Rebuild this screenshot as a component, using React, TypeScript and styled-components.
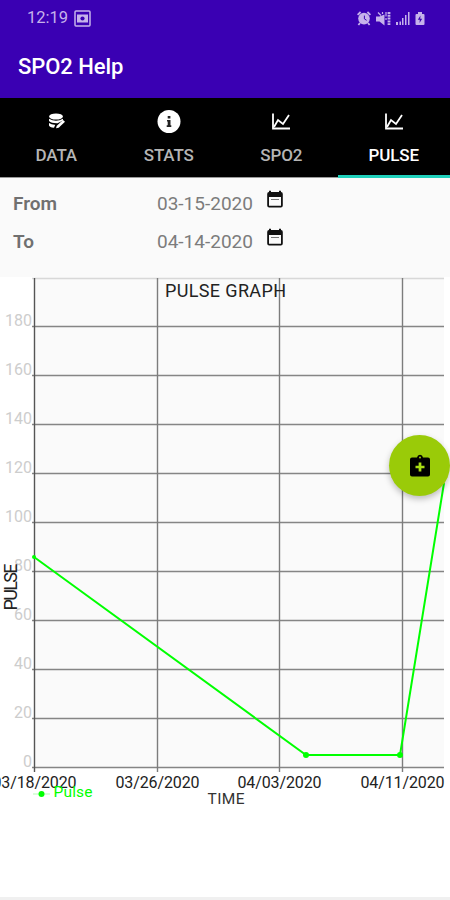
import React from "react";
import styled, { createGlobalStyle } from "styled-components";

const GlobalStyle = createGlobalStyle`
  * { box-sizing: border-box; }
  body { margin: 0; background: #fff; font-family: Roboto, "Liberation Sans", sans-serif; }
`;

const Screen = styled.main`
  position: relative;
  width: 450px;
  height: 900px;
  overflow: hidden;
  background: #fff;
  display: flex;
  flex-direction: column;
`;

const StatusBar = styled.div`
  height: 36px;
  flex: none;
  display: flex;
  align-items: center;
  justify-content: space-between;
  padding: 0 25px 0 27px;
  background: #3a00b3;
  color: #c6b2eb;
`;

const StatusGroup = styled.div<{ $gap: number }>`
  display: flex;
  align-items: center;
  gap: ${(p) => p.$gap}px;
  svg { display: block; }
`;

const Clock = styled.span`
  font-size: 16.5px;
  line-height: 20px;
`;

const AppBar = styled.header`
  height: 62px;
  flex: none;
  padding: 0 18px;
  background: #3a00b3;
  color: #fff;
`;

const Title = styled.h1`
  margin: 0;
  padding-top: 17px;
  font-size: 22px;
  line-height: 28px;
  font-weight: 500;
  letter-spacing: -0.05px;
`;

const Tabs = styled.nav`
  height: 80px;
  flex: none;
  display: grid;
  grid-template-columns: repeat(4, 1fr);
  background: #000;
  border-bottom: 1px solid #999;
`;

const Tab = styled.div<{ $active?: boolean }>`
  display: flex;
  flex-direction: column;
  align-items: center;
  height: 80px;
  padding-top: 11px;
  color: ${(p) => (p.$active ? "#fff" : "#b5b5b5")};
  border-bottom: 3px solid ${(p) => (p.$active ? "#1fd0bb" : "transparent")};
  font-size: 17px;
  line-height: 22px;
  font-weight: 500;
  letter-spacing: -0.1px;
  svg { display: block; height: 25px; margin-bottom: 10px; }
`;

const Filters = styled.section`
  height: 99px;
  flex: none;
  padding-top: 6px;
  background: #fafafa;
`;

const FilterRow = styled.div`
  height: 38px;
  display: grid;
  grid-template-columns: 144px 109px 24px;
  align-items: center;
  padding-left: 13px;
  font-size: 19px;
  svg { display: block; margin-top: -8px; }
`;

const FilterLabel = styled.span`
  color: #707070;
  font-weight: 600;
`;

const FilterDate = styled.span`
  color: #7c7c7c;
`;

const ChartArea = styled.section`
  flex: 1;
  min-height: 0;
  svg { display: block; }
`;

const BottomEdge = styled.footer`
  height: 3px;
  flex: none;
  background: #f0f0f0;
`;

const AddButton = styled.button`
  position: absolute;
  left: 389px;
  top: 435px;
  width: 61px;
  height: 61px;
  border: 0;
  border-radius: 50%;
  padding: 0;
  display: grid;
  place-items: center;
  background: #9acb08;
  box-shadow: 0 3px 6px rgba(0, 0, 0, 0.25);
`;

const ScreenshotIcon = () => (
  <svg width="17" height="17" viewBox="0 0 17 17" fill="none" stroke="currentColor">
    <rect x="1" y="1" width="15" height="15" rx="1" strokeWidth="1.5" />
    <path d="M3 4.5h11v8H3z" fill="currentColor" stroke="none" />
    <circle cx="8.5" cy="8.5" r="2.1" fill="#3a00b3" stroke="none" />
  </svg>
);

const AlarmIcon = () => (
  <svg width="14" height="15" viewBox="0 0 14 15" fill="none" stroke="currentColor">
    <circle cx="7" cy="7.6" r="5.8" fill="currentColor" stroke="none" />
    <path d="M.6 3.8 3.6 1M13.4 3.8 10.4 1M3 12l-1.6 2M11 12l1.6 2" strokeWidth="1.8" />
    <path d="M7.4 4.6v3.3l2.2 1.4" stroke="#3a00b3" />
  </svg>
);

const MuteIcon = () => (
  <svg width="15" height="15" viewBox="0 0 15 15" fill="none" stroke="currentColor">
    <path d="M0 5.500h3.500l5-2v11L3.500 10.500H0z" fill="currentColor" stroke="none" />
    <path d="m2 1.500 3 3M6.500 1v2" strokeWidth="1.2" />
    <path d="M10 1v4.500M10 7v2" strokeWidth="1.2" />
    <path d="M13 1v13" strokeWidth="2.800" strokeDasharray="2 .8" />
  </svg>
);

const SignalIcon = () => (
  <svg width="14" height="14" viewBox="0 0 14 14" fill="currentColor">
    <path d="M0 11h2v3H0zM3.500 10.500H5V14H3.500zM6 7h1.500v7H6zM9 4h1.500v10H9zM12 1h1.500v13H12z" />
  </svg>
);

const BatteryIcon = () => (
  <svg width="10" height="15" viewBox="0 0 10 15">
    <path d="M3 1h4v2h1.500q1 0 1 1v9q0 1-1 1h-7q-1 0-1-1V4q0-1 1-1H3z" fill="currentColor" />
    <path d="M5.500 4.500 2.800 8.700h2L4.500 12 7.200 7.700h-2z" fill="#3a00b3" />
  </svg>
);

const DataIcon = () => (
  <svg width="18" height="25" viewBox="0 0 18 25" fill="#fff">
    <ellipse cx="9" cy="7.500" rx="6.900" ry="3.100" />
    <path d="M2 9.800q7 3.800 14 0v1.700l-5.500 2.700Q4.500 14.400 2 12z" />
    <path d="M2 14q3 2 6.300 1.700L7 18.800Q2.500 18.300 2 16.500z" />
    <path d="m16 11 2 1.700-6.300 6-2.700.6.800-2.500z" />
  </svg>
);

const InfoIcon = () => (
  <svg width="24" height="25" viewBox="0 0 24 25">
    <circle cx="12" cy="12.500" r="11.500" fill="#fff" />
    <path d="M10.700 7h2.700v2.500h-2.700zM10 11h3.500v5.200h.8V18H9.700v-1.800h1V12.500H10z" fill="#222" />
  </svg>
);

const GraphIcon = () => (
  <svg width="20" height="25" viewBox="0 0 20 25" fill="none" stroke="#fff">
    <path d="M2 4.500v15h17" strokeWidth="1.800" />
    <path d="m3 18 4-7 5 4 6-9" strokeWidth="1.800" />
  </svg>
);

const CalendarIcon = () => (
  <svg width="18" height="19" viewBox="0 0 18 19">
    <path
      d="M3 2V.8h2V2h8V.8h2V2q1.800 0 1.800 2v11.500q0 2-2 2H3.200q-2 0-2-2V4q0-2 1.800-2zM3 7v8.700h12V7z"
      fill="#111"
      fillRule="evenodd"
    />
    <path d="M5 9.500h8" stroke="#777" strokeWidth="1" />
  </svg>
);

const KitIcon = () => (
  <svg width="22" height="24" viewBox="0 0 22 24">
    <path d="M3 3.500h5Q8.500 .8 11 .8t3 2.700h5q2 0 2 2v15q0 2-2 2H3q-2 0-2-2v-15q0-2 2-2z" fill="#000" />
    <circle cx="11" cy="3.500" r="1" fill="#9acb08" />
    <path d="M11 8.500v9M6.500 13h9" stroke="#a9dc14" strokeWidth="2.700" />
  </svg>
);

const LEFT = 34.5;
const RIGHT = 444;
const BASE = 490.5;
const STEP = 48.95;
const yTicks = [0, 20, 40, 60, 80, 100, 120, 140, 160, 180, 200];
const xTicks = [
  { x: 34.5, label: "03/18/2020" },
  { x: 157.5, label: "03/26/2020" },
  { x: 279.5, label: "04/03/2020" },
  { x: 402.5, label: "04/11/2020" },
];
const points = [
  [34, 280],
  [306, 478],
  [400, 478],
  [444, 206],
];
const yFor = (value: number) => Math.floor(BASE - (value / 20) * STEP) + 0.5;

const PulseChart = () => (
  <svg width="450" height="620" viewBox="0 0 450 620" fontFamily="Roboto, sans-serif">
    <rect x={LEFT} y="0" width={RIGHT - LEFT} height={BASE} fill="#fafafa" />
    {yTicks.map((v) => (
      <path key={v} d={`M32 ${yFor(v)}H${RIGHT}`} stroke={v === 200 ? "#d8d8d8" : "#858585"} strokeWidth="1.3" />
    ))}
    {xTicks.map(({ x }, i) => (
      <path key={x} d={`M${x} 1V495`} stroke={i === 0 ? "#555" : "#7c7c7c"} strokeWidth="1.4" />
    ))}
    {yTicks.slice(0, 10).map((v) => (
      <text key={v} x="32" y={yFor(v) - 1} textAnchor="end" fontSize="16" fill="#cdcdcd">
        {v}
      </text>
    ))}
    {xTicks.map(({ x, label }) => (
      <text key={label} x={x} y="511" textAnchor="middle" fontSize="16" textLength="84" fill="#222">
        {label}
      </text>
    ))}
    <polyline points={points.map((p) => p.join(",")).join(" ")} fill="none" stroke="#0f0" strokeWidth="2" />
    {points.slice(0, 3).map(([x, y], i) => (
      <circle key={x} cx={x} cy={y} r={i === 0 ? 2 : 3} fill="#0f0" />
    ))}
    <text x="225.500" y="19.500" textAnchor="middle" fontSize="18" textLength="121" fill="#222">PULSE GRAPH</text>
    <text x="226" y="527" textAnchor="middle" fontSize="15.500" textLength="37" fill="#333">TIME</text>
    <text transform="translate(17 310) rotate(-90)" textAnchor="middle" fontSize="18" textLength="47" fill="#222">PULSE</text>
    <path d="M33 517H50" stroke="#0f0" strokeOpacity=".3" />
    <circle cx="41.500" cy="517" r="3" fill="#0f0" />
    <text x="53.500" y="519.500" fontSize="15.500" textLength="39" fill="#0f0">Pulse</text>
  </svg>
);

const filters = [
  { label: "From", date: "03-15-2020" },
  { label: "To", date: "04-14-2020" },
];

export default function App() {
  return (
    <Screen>
      <GlobalStyle />
      <StatusBar>
        <StatusGroup $gap={6}>
          <Clock>12:19</Clock>
          <ScreenshotIcon />
        </StatusGroup>
        <StatusGroup $gap={5}>
          <AlarmIcon />
          <MuteIcon />
          <SignalIcon />
          <BatteryIcon />
        </StatusGroup>
      </StatusBar>
      <AppBar>
        <Title>SPO2 Help</Title>
      </AppBar>
      <Tabs>
        <Tab><DataIcon />DATA</Tab>
        <Tab><InfoIcon />STATS</Tab>
        <Tab><GraphIcon />SPO2</Tab>
        <Tab $active><GraphIcon />PULSE</Tab>
      </Tabs>
      <Filters>
        {filters.map(({ label, date }) => (
          <FilterRow key={label}>
            <FilterLabel>{label}</FilterLabel>
            <FilterDate>{date}</FilterDate>
            <CalendarIcon />
          </FilterRow>
        ))}
      </Filters>
      <ChartArea>
        <PulseChart />
      </ChartArea>
      <BottomEdge />
      <AddButton aria-label="Add reading">
        <KitIcon />
      </AddButton>
    </Screen>
  );
}
